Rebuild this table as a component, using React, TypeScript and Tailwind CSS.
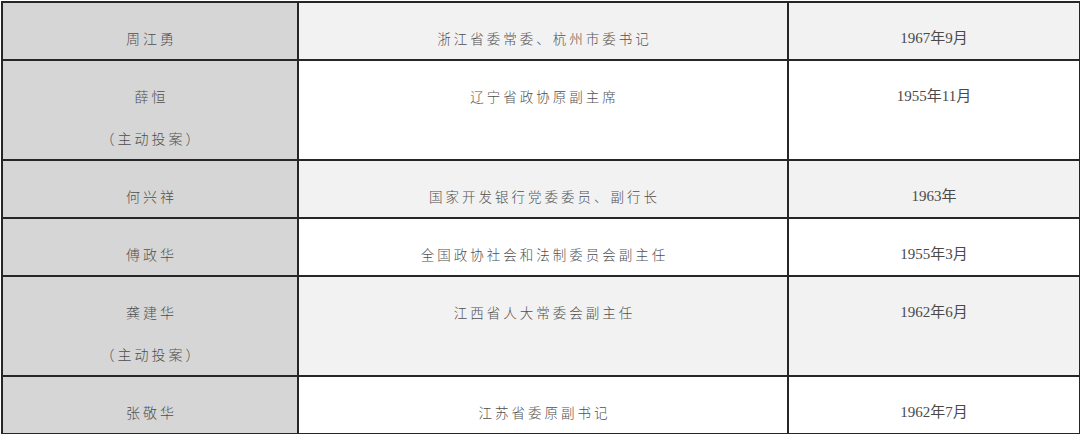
import * as React from "react";

interface Row {
  name: string;
  note?: string;
  post: string;
  born: string;
}

const rows: Row[] = [
  { name: "周江勇", post: "浙江省委常委、杭州市委书记", born: "1967年9月" },
  { name: "薛恒", note: "（主动投案）", post: "辽宁省政协原副主席", born: "1955年11月" },
  { name: "何兴祥", post: "国家开发银行党委委员、副行长", born: "1963年" },
  { name: "傅政华", post: "全国政协社会和法制委员会副主任", born: "1955年3月" },
  { name: "龚建华", note: "（主动投案）", post: "江西省人大常委会副主任", born: "1962年6月" },
  { name: "张敬华", post: "江苏省委原副书记", born: "1962年7月" },
];

const cjk = "font-['Noto_Sans_CJK_SC',sans-serif] font-light";
const cell = "border-2 border-[#262626] align-top text-center pt-[14px] pb-0 leading-[42px]";

export default function App() {
  return (
    <div className="w-[1080px] h-[434px] bg-white overflow-hidden">
      <table className="ml-[1px] mt-[1px] w-[1078px] border-collapse table-fixed">
        <colgroup>
          <col className="w-[296px]" />
          <col className="w-[490px]" />
          <col className="w-[292px]" />
        </colgroup>
        <tbody>
          {rows.map((r, i) => {
            const bg = i % 2 === 0 ? "bg-[#f2f2f2]" : "bg-white";
            return (
              <tr key={r.name}>
                <td className={`${cell} bg-[#d6d6d6] ${cjk} text-[14px] text-[#4f4f4f] tracking-[3px] pl-[3px]`}>
                  <div>{r.name}</div>
                  {r.note && <div>{r.note}</div>}
                </td>
                <td className={`${cell} ${bg} ${cjk} text-[13.5px] text-[#4f4f4f] tracking-[3px] pl-[3px]`}>
                  {r.post}
                </td>
                <td className={`${cell} ${bg} font-['Liberation_Serif','Noto_Sans_CJK_SC',serif] text-[15px] text-[#4a4a4a]`}>
                  {r.born}
                </td>
              </tr>
            );
          })}
        </tbody>
      </table>
    </div>
  );
}
